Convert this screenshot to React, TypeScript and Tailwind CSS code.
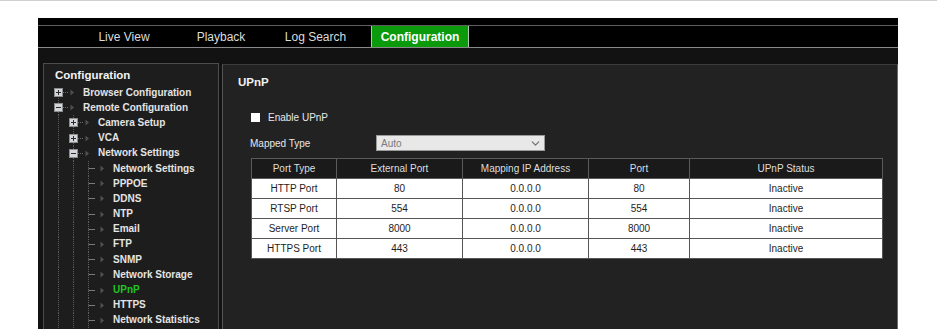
import { ChevronDown } from "lucide-react";

type Kind = "plus" | "minus" | "leaf";

interface TreeNode {
  label: string;
  level: 1 | 2 | 3;
  kind: Kind;
  active?: boolean;
}

const TREE: TreeNode[] = [
  { label: "Browser Configuration", level: 1, kind: "plus" },
  { label: "Remote Configuration", level: 1, kind: "minus" },
  { label: "Camera Setup", level: 2, kind: "plus" },
  { label: "VCA", level: 2, kind: "plus" },
  { label: "Network Settings", level: 2, kind: "minus" },
  { label: "Network Settings", level: 3, kind: "leaf" },
  { label: "PPPOE", level: 3, kind: "leaf" },
  { label: "DDNS", level: 3, kind: "leaf" },
  { label: "NTP", level: 3, kind: "leaf" },
  { label: "Email", level: 3, kind: "leaf" },
  { label: "FTP", level: 3, kind: "leaf" },
  { label: "SNMP", level: 3, kind: "leaf" },
  { label: "Network Storage", level: 3, kind: "leaf" },
  { label: "UPnP", level: 3, kind: "leaf", active: true },
  { label: "HTTPS", level: 3, kind: "leaf" },
  { label: "Network Statistics", level: 3, kind: "leaf" },
];

const PORTS = [
  { type: "HTTP Port", ext: "80", ip: "0.0.0.0", port: "80", status: "Inactive" },
  { type: "RTSP Port", ext: "554", ip: "0.0.0.0", port: "554", status: "Inactive" },
  { type: "Server Port", ext: "8000", ip: "0.0.0.0", port: "8000", status: "Inactive" },
  { type: "HTTPS Port", ext: "443", ip: "0.0.0.0", port: "443", status: "Inactive" },
];

// linea punteada vertical de la guia del arbol
function Guide() {
  return (
    <svg width="15" height="15" viewBox="0 0 15 15" preserveAspectRatio="none" className="shrink-0 h-full">
      <line x1="7.5" y1="0" x2="7.5" y2="15" stroke="#5e5e5e" strokeDasharray="1 1" />
    </svg>
  );
}

function NodeIcon({ kind, first }: { kind: Kind; first?: boolean }) {
  return (
    <svg width="32" height="15" viewBox="0 0 32 15" className="shrink-0">
      <line x1="7.5" y1={first ? 7 : 0} x2="7.5" y2="15" stroke="#5e5e5e" strokeDasharray="1 1" />
      {kind === "leaf" ? (
        <line x1="7.5" y1="7.5" x2="14" y2="7.5" stroke="#7a7a7a" />
      ) : (
        <line x1="12" y1="7.5" x2="18" y2="7.5" stroke="#6c6c6c" strokeDasharray="1 1" />
      )}
      {kind !== "leaf" && (
        <>
          <rect x="3.5" y="3.5" width="8" height="8" fill="#d3d7dc" stroke="#8c8c8c" />
          <line x1="5" y1="7.5" x2="10" y2="7.5" stroke="#2b2b2b" />
          {kind === "plus" && <line x1="7.5" y1="5" x2="7.5" y2="10" stroke="#2b2b2b" />}
        </>
      )}
      <polygon points="19.5,4.5 23,7.5 19.5,10.5" fill="#505050" />
    </svg>
  );
}

function TreeRow({ node, first }: { node: TreeNode; first: boolean }) {
  return (
    <div className="flex items-center h-[15.2px]">
      <div className="w-[7px] shrink-0" />
      {node.level >= 2 && <Guide />}
      {node.level >= 3 && <Guide />}
      <NodeIcon kind={node.kind} first={first} />
      <span
        className={
          node.active
            ? "text-[10px] font-bold leading-none whitespace-nowrap text-[#22c322]"
            : "text-[10px] font-bold leading-none whitespace-nowrap text-[#e4e4e4]"
        }
      >
        {node.label}
      </span>
    </div>
  );
}

function NavTab({ label, width }: { label: string; width: string }) {
  return (
    <div className={`${width} h-full flex items-center justify-center text-[12px] text-[#dcdcdc]`}>
      {label}
    </div>
  );
}

export default function App() {
  return (
    <div className="w-[937px] h-[329px] overflow-hidden bg-white border-t border-[#d0d0d0] font-['Liberation_Sans',Arial,sans-serif]">
      <div className="ml-[38px] mt-[17px] w-[860px]">
        <div className="h-[8px] bg-black border-b border-[#5e5e5e]" />

        <div className="h-[22px] bg-black border-b border-[#8a8a8a] flex">
          <div className="w-[37px] shrink-0" />
          <NavTab label="Live View" width="w-[98px]" />
          <NavTab label="Playback" width="w-[96px]" />
          <NavTab label="Log Search" width="w-[93px]" />
          <div className="w-[9px] shrink-0" />
          <div className="w-[98px] h-full flex items-center justify-center bg-[#0b9a0b] border-x border-[#b8c8b8] text-[12px] font-bold text-white">
            Configuration
          </div>
        </div>

        <div className="h-[300px] bg-[#121212] flex pt-[15px] pl-[5px]">
          <div className="w-[176px] h-[300px] shrink-0 bg-[#1d1d1d] border border-[#4c4c4c]">
            <div className="pt-[4px] pl-[11px] text-[11.5px] font-bold leading-[14px] text-[#f2f2f2]">
              Configuration
            </div>
            <div className="mt-[3px]">
              {TREE.map((n, i) => (
                <TreeRow key={i} node={n} first={i === 0} />
              ))}
            </div>
          </div>

          <div className="w-[3px] shrink-0" />

          <div className="flex-1 h-[300px] mt-[1px] bg-[#222222] border-l border-t border-r border-l-[#555] border-t-[#3c3c3c] border-r-[#6a6a6a] pt-[10px] pl-[15px]">
            <div className="text-[11.5px] font-bold leading-[14px] text-[#f2f2f2]">UPnP</div>

            <div className="ml-[12px]">
              <div className="mt-[20px] h-[16px] flex items-center">
                <div className="ml-[1px] w-[9px] h-[9px] bg-white" />
                <span className="ml-[8px] text-[10px] text-[#e8e8e8]">Enable UPnP</span>
              </div>

              <div className="mt-[10px] h-[16px] flex items-center">
                <span className="w-[126px] text-[10px] text-[#e8e8e8]">Mapped Type</span>
                <div className="w-[169px] h-[16px] flex items-center justify-between bg-[#e8e8e8] border border-[#9a9a9a] pl-[4px] pr-[2px]">
                  <span className="text-[10px] text-[#7a7a7a]">Auto</span>
                  <ChevronDown size={13} strokeWidth={2.2} color="#707070" />
                </div>
              </div>

              <table className="mt-[7px] ml-[1px] w-[631px] border-collapse text-[10px] text-center table-fixed">
                <colgroup>
                  <col className="w-[85px]" />
                  <col className="w-[126px]" />
                  <col className="w-[126px]" />
                  <col className="w-[101px]" />
                  <col className="w-[193px]" />
                </colgroup>
                <thead>
                  <tr className="h-[20px] bg-[#1a1a1a] text-[#dedede]">
                    <th className="font-normal border border-[#5a5a5a]">Port Type</th>
                    <th className="font-normal border border-[#5a5a5a]">External Port</th>
                    <th className="font-normal border border-[#5a5a5a]">Mapping IP Address</th>
                    <th className="font-normal border border-[#5a5a5a]">Port</th>
                    <th className="font-normal border border-[#5a5a5a]">UPnP Status</th>
                  </tr>
                </thead>
                <tbody>
                  {PORTS.map((p) => (
                    <tr key={p.type} className="h-[20px] bg-white text-[#1e1e1e]">
                      <td className="border border-[#555555]">{p.type}</td>
                      <td className="border border-[#555555]">{p.ext}</td>
                      <td className="border border-[#555555]">{p.ip}</td>
                      <td className="border border-[#555555]">{p.port}</td>
                      <td className="border border-[#555555]">{p.status}</td>
                    </tr>
                  ))}
                </tbody>
              </table>
            </div>
          </div>
        </div>
      </div>
    </div>
  );
}
